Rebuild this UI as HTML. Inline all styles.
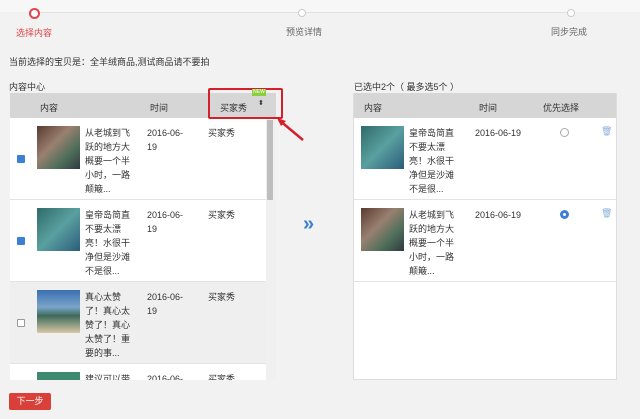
<!DOCTYPE html><html style="overflow:hidden;width:640px;height:419px"><head><meta charset="utf-8"><style>
*{margin:0;padding:0;box-sizing:border-box}
body{width:640px;height:419px;background:#f2f2f2;font-family:"Liberation Sans","Noto Sans CJK SC",sans-serif;font-size:9px;color:#333;position:relative;overflow:hidden}
.a{position:absolute}
.hd{background:#d6d6d6;height:25px}
.row{position:absolute;left:0;height:82px;border-bottom:1px solid #e3e3e3}
.img{position:absolute;width:43px;height:43px;top:8px}
.t{position:absolute;top:8px;line-height:14px;font-size:9px;width:48px}
.d{position:absolute;top:8px;line-height:14px}
.cb{position:absolute;width:8px;height:8px;border:1px solid #999;background:#fff;border-radius:1px}
.cb.on{background:#3b7fd9;border-color:#3b7fd9}
</style></head><body>
<div class="a" style="left:0;top:0;width:640px;height:12px;background:#f7f7f7"></div>
<div class="a" style="left:40px;top:12px;width:530px;height:1px;background:#e2e2e2"></div>
<div class="a" style="left:29px;top:8px;width:11px;height:11px;border:2px solid #e0454a;border-radius:50%;background:#fff"></div>
<div class="a" style="left:16px;top:26px;color:#e0454a">选择内容</div>
<div class="a" style="left:298px;top:9px;width:8px;height:8px;border:1px solid #ccc;border-radius:50%;background:#fff"></div>
<div class="a" style="left:286px;top:25px;color:#666">预览详情</div>
<div class="a" style="left:567px;top:9px;width:8px;height:8px;border:1px solid #ccc;border-radius:50%;background:#fff"></div>
<div class="a" style="left:551px;top:25px;color:#666">同步完成</div>
<div class="a" style="left:9px;top:55px">当前选择的宝贝是：全羊绒商品,测试商品请不要拍</div>
<div class="a" style="left:9px;top:80px">内容中心</div>

<div class="a" style="left:10px;top:93px;width:266px;height:287px;background:#fff;overflow:hidden">
<div class="hd" style="position:relative"><span class="a" style="left:30px;top:8px">内容</span><span class="a" style="left:140px;top:8px">时间</span><span class="a" style="left:210px;top:8px">买家秀</span><span class="a" style="left:248px;top:6px;font-size:7px">⬍</span></div>
<div class="row" style="top:25px;width:256px">
<div class="cb on" style="left:7px;top:37px"></div><div class="img" style="left:27px;background:linear-gradient(135deg,#5a3a30,#9a8070 40%,#4f6f5a 70%,#2e3a40)"></div>
<div class="t" style="left:75px">从老城到飞跃的地方大概要一个半小时，一路颠簸...</div><div class="d" style="left:137px">2016-06-<br>19</div><div class="d" style="left:198px">买家秀</div></div>
<div class="row" style="top:107px;width:256px">
<div class="cb on" style="left:7px;top:37px"></div><div class="img" style="left:27px;background:linear-gradient(135deg,#2f6b6a,#5aa0a0 50%,#2a5c7a)"></div>
<div class="t" style="left:75px">皇帝岛简直不要太漂亮！水很干净但是沙滩不是很...</div><div class="d" style="left:137px">2016-06-<br>19</div><div class="d" style="left:198px">买家秀</div></div>
<div class="row" style="top:189px;width:256px;background:#efefef">
<div class="cb" style="left:7px;top:37px"></div><div class="img" style="left:27px;background:linear-gradient(180deg,#3a6fb0,#7aa4c8 40%,#3e6a5a 60%,#d8c8a8)"></div>
<div class="t" style="left:75px">真心太赞了！真心太赞了！真心太赞了！重要的事...</div><div class="d" style="left:137px">2016-06-<br>19</div><div class="d" style="left:198px">买家秀</div></div>
<div class="row" style="top:271px;width:256px;border:0">
<div class="img" style="left:27px;background:#3e8a70"></div>
<div class="t" style="left:75px">建议可以带</div><div class="d" style="left:137px">2016-06-</div><div class="d" style="left:198px">买家秀</div></div>
<div class="a" style="left:256px;top:25px;width:10px;height:262px;background:#f0f0f0"></div>
<div class="a" style="left:257px;top:27px;width:6px;height:80px;background:#bdbdbd"></div>
</div>
<div class="a" style="left:208px;top:88px;width:75px;height:31px;border:2px solid #d4202a;border-radius:2px"></div>
<div class="a" style="left:252px;top:89px;width:14px;height:7px;background:#8ccf3c;font-size:5px;color:#fff;text-align:center;line-height:7px">NEW</div>
<svg class="a" style="left:274px;top:116px" width="34" height="28"><path d="M5 4 L29 24" stroke="#d4202a" stroke-width="2.5" fill="none"/><path d="M3 2 L12 5 L7 10 Z" fill="#d4202a"/></svg>
<div class="a" style="left:303px;top:213px;color:#3b7fd9;font-size:20px;font-weight:bold">»</div>

<div class="a" style="left:354px;top:80px">已选中2个（ 最多选5个 ）</div>
<div class="a" style="left:353px;top:93px;width:264px;height:287px;background:#fff;border:1px solid #ddd;border-top:0">
<div class="hd" style="position:relative"><span class="a" style="left:10px;top:8px">内容</span><span class="a" style="left:125px;top:8px">时间</span><span class="a" style="left:189px;top:8px">优先选择</span></div>
<div class="row" style="top:25px;width:262px">
<div class="img" style="left:7px;background:linear-gradient(135deg,#2f6b6a,#5aa0a0 50%,#2a5c7a)"></div>
<div class="t" style="left:55px">皇帝岛简直不要太漂亮！水很干净但是沙滩不是很...</div><div class="d" style="left:121px">2016-06-19</div>
<div class="a" style="left:206px;top:10px;width:9px;height:9px;border:1px solid #aaa;border-radius:50%"></div><div class="a" style="left:247px;top:8px;color:#8ab0d8">🗑</div></div>
<div class="row" style="top:107px;width:262px">
<div class="img" style="left:7px;background:linear-gradient(135deg,#5a3a30,#9a8070 40%,#4f6f5a 70%,#2e3a40)"></div>
<div class="t" style="left:55px">从老城到飞跃的地方大概要一个半小时，一路颠簸...</div><div class="d" style="left:121px">2016-06-19</div>
<div class="a" style="left:206px;top:10px;width:9px;height:9px;border:3px solid #3b7fd9;background:#fff;border-radius:50%"></div><div class="a" style="left:247px;top:8px;color:#8ab0d8">🗑</div></div>
</div>
<div class="a" style="left:9px;top:393px;width:42px;height:17px;background:#d9403a;border-radius:2px;color:#fff;text-align:center;line-height:17px">下一步</div>
</body></html>
